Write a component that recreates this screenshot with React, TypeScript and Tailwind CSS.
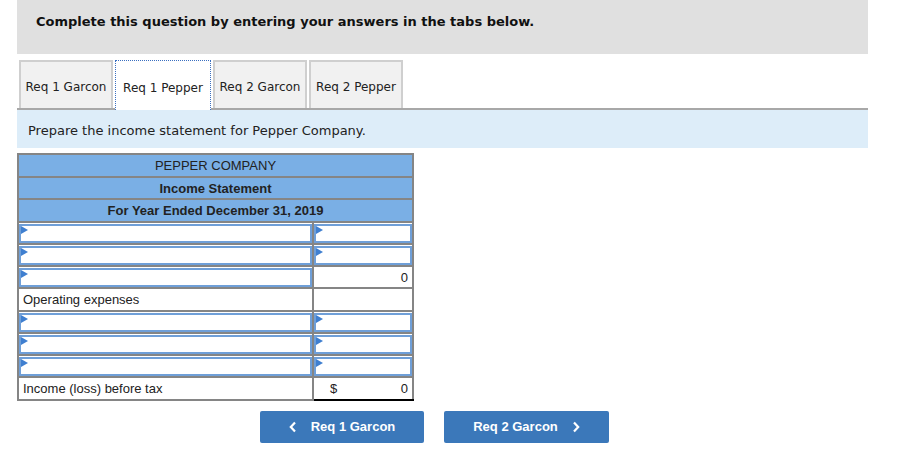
import React from 'react'

const tabs = ['Req 1 Garcon', 'Req 1 Pepper', 'Req 2 Garcon', 'Req 2 Pepper']
const activeTab = 1

const verdana = { fontFamily: '"DejaVu Sans", Verdana, sans-serif' }

function Marker() {
  return (
    <span className="absolute left-0 top-0 w-0 h-0 border-y-[4px] border-y-transparent border-l-[7px] border-l-[#3f7fd0]" />
  )
}

function InputCell() {
  return (
    <td className="border-2 border-[#858585] p-0 h-[22px]">
      <div className="relative h-[19px] border-2 border-[#6f9fd8] bg-white">
        <Marker />
      </div>
    </td>
  )
}

function InputRow() {
  return (
    <tr>
      <InputCell />
      <InputCell />
    </tr>
  )
}

export default function App() {
  return (
    <div className="w-[908px] h-[460px] bg-white text-[#222]" style={verdana}>
      <div className="ml-[17px] w-[851px]">
        {/* Banner */}
        <div className="h-[54px] bg-[#e0e0e0] flex items-center pl-[19px] pb-[10px]">
          <span className="text-[13px] font-bold text-[#111]">
            Complete this question by entering your answers in the tabs below.
          </span>
        </div>

        {/* Tabs */}
        <div className="mt-[6px] flex items-end gap-[2px] pl-[2px] border-b-2 border-[#a8a8a8] h-[50px]">
          {tabs.map((t, i) =>
            i === activeTab ? (
              <div
                key={t}
                className="h-[50px] -mb-[2px] w-[96px] bg-white border border-dotted border-[#3a6fc0] border-b-0 flex items-center justify-center pt-[5px] text-[12px] text-[#222]"
              >
                {t}
              </div>
            ) : (
              <div
                key={t}
                className="h-[48px] w-[94px] bg-[#f1f1f1] border-2 border-[#cfcfcf] border-b-0 flex items-center justify-center pt-[4px] text-[12px] text-[#222]"
              >
                {t}
              </div>
            )
          )}
        </div>

        {/* Instruction */}
        <div className="h-[38px] bg-[#ddedf9] flex items-center pl-[11px] pt-[3px]">
          <span className="text-[13px] text-[#222]">Prepare the income statement for Pepper Company.</span>
        </div>

        {/* Statement */}
        <table
          className="mt-[5px] border-collapse border-2 border-[#858585] w-[395px] text-[13px] text-[#222] table-fixed"
          style={{ fontFamily: '"Liberation Sans", Arial, sans-serif' }}
        >
          <colgroup>
            <col className="w-[295px]" />
            <col className="w-[100px]" />
          </colgroup>
          <tbody>
            <tr>
              <td colSpan={2} className="border-2 border-[#858585] bg-[#7aafe5] h-[23px] text-center leading-none">
                PEPPER COMPANY
              </td>
            </tr>
            <tr>
              <td colSpan={2} className="border-2 border-[#858585] bg-[#7aafe5] h-[22px] text-center font-bold leading-none">
                Income Statement
              </td>
            </tr>
            <tr>
              <td colSpan={2} className="border-2 border-[#858585] bg-[#7aafe5] h-[23px] text-center font-bold leading-none">
                For Year Ended December 31, 2019
              </td>
            </tr>
            <InputRow />
            <InputRow />
            <tr>
              <InputCell />
              <td className="border-2 border-[#858585] border-t-black h-[22px] text-right pr-[4px] leading-none">0</td>
            </tr>
            <tr>
              <td className="border-2 border-[#858585] h-[23px] pl-[4px] leading-none">Operating expenses</td>
              <td className="border-2 border-[#858585] h-[23px]" />
            </tr>
            <InputRow />
            <InputRow />
            <InputRow />
            <tr>
              <td className="border-2 border-[#858585] h-[23px] pl-[4px] leading-none">Income (loss) before tax</td>
              <td className="border-2 border-[#858585] border-t-black border-b-black h-[23px] px-[4px] leading-none">
                <div className="flex justify-between">
                  <span className="pl-[12px]">$</span>
                  <span>0</span>
                </div>
              </td>
            </tr>
          </tbody>
        </table>

        {/* Nav buttons */}
        <div
          className="mt-[10px] ml-[243px] flex gap-[20px]"
          style={{ fontFamily: '"Liberation Sans", Arial, sans-serif' }}
        >
          <button className="w-[164px] h-[32px] rounded-[2px] bg-[#3b78ba] text-white text-[13px] font-bold flex items-center justify-center gap-[14px]">
            <svg width="8" height="12" viewBox="0 0 8 12">
              <path d="M6 1.5L1.8 6L6 10.5" stroke="white" strokeWidth="2.2" fill="none" />
            </svg>
            <span>Req 1 Garcon</span>
          </button>
          <button className="w-[165px] h-[32px] rounded-[2px] bg-[#3b78ba] text-white text-[13px] font-bold flex items-center justify-center gap-[14px]">
            <span>Req 2 Garcon</span>
            <svg width="8" height="12" viewBox="0 0 8 12">
              <path d="M2 1.5L6.2 6L2 10.5" stroke="white" strokeWidth="2.2" fill="none" />
            </svg>
          </button>
        </div>
      </div>
    </div>
  )
}
